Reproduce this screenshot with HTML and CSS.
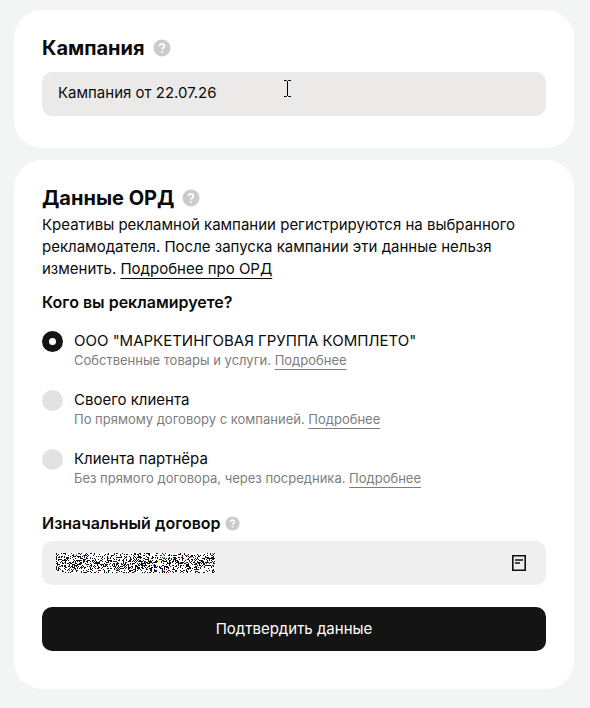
FILE: index.html
```html
<!DOCTYPE html>
<html lang="ru">
<head>
    <meta charset="UTF-8">
    <meta name="viewport" content="width=device-width, initial-scale=1.0">
    <title>Кампания</title>
    <link rel="stylesheet" href="styles.css">
</head>
<body>
    <main>
        <section class="card">
            <div class="card-title">
                <h2><label for="campaign-name">Кампания</label></h2>
                <svg class="help" viewBox="0 0 18 18" aria-hidden="true">
                    <circle cx="9" cy="9" r="8.5" fill="#cbcbcb"/>
                    <path d="M6.5 7.2a2.4 2.2 0 1 1 3.8 1.7c-.8.5-1.3.8-1.3 1.7M9 11.9v1.9" fill="none" stroke="#fff" stroke-width="1.9"/>
                </svg>
            </div>
            <div class="field-wrap">
                <input class="field" type="text" id="campaign-name" value="Кампания от 22.07.26">
                <svg class="cursor" viewBox="0 0 9 17" aria-hidden="true">
                    <path d="M1 .5h2.5l1 1 1-1H8M4.5 1v15M1 16.5h2.5l1-1 1 1H8" fill="none" stroke="#000"/>
                </svg>
            </div>
        </section>

        <section class="card card-ord">
            <div class="card-title">
                <h2>Данные ОРД</h2>
                <svg class="help" viewBox="0 0 18 18" aria-hidden="true">
                    <circle cx="9" cy="9" r="8.5" fill="#cbcbcb"/>
                    <path d="M6.5 7.2a2.4 2.2 0 1 1 3.8 1.7c-.8.5-1.3.8-1.3 1.7M9 11.9v1.9" fill="none" stroke="#fff" stroke-width="1.9"/>
                </svg>
            </div>
            <p class="intro">Креативы рекламной кампании регистрируются на выбранного рекламодателя. После запуска кампании эти данные нельзя изменить. <a href="#">Подробнее про ОРД</a></p>

            <form id="ord-form">
                <fieldset>
                    <legend>Кого вы рекламируете?</legend>
                    <div class="option">
                        <input type="radio" name="advertiser" id="adv-own" checked>
                        <div>
                            <label for="adv-own">ООО "МАРКЕТИНГОВАЯ ГРУППА КОМПЛЕТО"</label>
                            <p>Собственные товары и услуги. <a href="#">Подробнее</a></p>
                        </div>
                    </div>
                    <div class="option">
                        <input type="radio" name="advertiser" id="adv-client">
                        <div>
                            <label for="adv-client">Своего клиента</label>
                            <p>По прямому договору с компанией. <a href="#">Подробнее</a></p>
                        </div>
                    </div>
                    <div class="option">
                        <input type="radio" name="advertiser" id="adv-partner">
                        <div>
                            <label for="adv-partner">Клиента партнёра</label>
                            <p>Без прямого договора, через посредника. <a href="#">Подробнее</a></p>
                        </div>
                    </div>
                </fieldset>

                <div class="contract-title">
                    <h3 id="contract-label">Изначальный договор</h3>
                    <svg class="help help-small" viewBox="0 0 18 18" aria-hidden="true">
                        <circle cx="9" cy="9" r="8.5" fill="#cbcbcb"/>
                        <path d="M6.5 7.2a2.4 2.2 0 1 1 3.8 1.7c-.8.5-1.3.8-1.3 1.7M9 11.9v1.9" fill="none" stroke="#fff" stroke-width="1.9"/>
                    </svg>
                </div>
                <button type="button" class="field contract" aria-labelledby="contract-label">
                    <canvas id="contract-mask" width="159" height="20"></canvas>
                    <svg class="doc-icon" viewBox="0 0 16 18" aria-hidden="true">
                        <path d="M1.8 1.8h12.4v14.4H1.8zM4 6h8M4 9h5" fill="none" stroke="#111" stroke-width="1.6"/>
                    </svg>
                </button>
                <button type="submit" class="submit">Подтвердить данные</button>
            </form>
        </section>
    </main>
    <script src="script.js"></script>
</body>
</html>
```
FILE: styles.css
```css
* {
    box-sizing: border-box;
}

body {
    margin: 0;
    background: #f3f5f4;
    color: #0b0b0b;
    font-family: Inter, "Liberation Sans", sans-serif;
    font-size: 15px;
    line-height: 22px;
}

main {
    display: flex;
    flex-direction: column;
    gap: 12px;
    padding: 10px 16px 18px 14px;
}

.card {
    padding: 24px 28px 32px;
    background: #fff;
    border-radius: 28px;
}

.card-ord {
    padding-bottom: 38px;
}

.card-title {
    display: flex;
    align-items: center;
    gap: 8px;
}

h2, h3, p {
    margin: 0;
}

h2 {
    font-size: 20px;
    line-height: 28px;
    font-weight: 700;
}

.help {
    width: 18px;
    height: 18px;
}

.help-small {
    width: 15px;
    height: 15px;
}

.field-wrap {
    position: relative;
    margin-top: 10px;
}

.field {
    display: block;
    width: 100%;
    height: 44px;
    padding: 0 16px 3px;
    border: none;
    border-radius: 10px;
    background: #ebeae9;
    color: inherit;
    font: inherit;
}

.cursor {
    position: absolute;
    left: 241px;
    top: 8px;
    width: 9px;
    height: 17px;
}

a {
    color: inherit;
    text-decoration: underline;
    text-decoration-thickness: 1px;
    text-underline-offset: 4px;
    text-decoration-skip-ink: none;
}

.intro {
    margin-top: 2px;
}

fieldset {
    display: flex;
    flex-direction: column;
    gap: 20px;
    margin: 11px 0 0;
    padding: 0;
    border: none;
}

legend {
    margin-bottom: 17px;
    padding: 0;
    font-size: 16px;
    font-weight: 600;
}

.option {
    display: flex;
    gap: 11px;
}

.option label {
    display: block;
}

.option p {
    font-size: 13px;
    line-height: 17px;
    color: #7d7d7d;
}

input[type="radio"] {
    appearance: none;
    flex: none;
    width: 21px;
    height: 21px;
    margin: 1px 0 0;
    border-radius: 50%;
    background: #e2e2e2;
}

input[type="radio"]:checked {
    border: 7px solid #141414;
    background: #fff;
}

.contract-title {
    display: flex;
    align-items: center;
    gap: 4px;
    margin-top: 25px;
}

h3 {
    font-size: 16px;
    line-height: 22px;
    font-weight: 600;
}

.contract {
    display: flex;
    align-items: center;
    justify-content: space-between;
    margin-top: 7px;
    padding: 0 19px 0 14px;
    background: #f0efef;
}

.doc-icon {
    width: 16px;
    height: 18px;
}

.submit {
    width: 100%;
    height: 44px;
    margin-top: 22px;
    border: none;
    border-radius: 10px;
    background: #141414;
    color: #fff;
    font: inherit;
    cursor: pointer;
}
```
FILE: script.js
```js
// noise that hides the contract number
const canvas = document.getElementById('contract-mask');
const ctx = canvas.getContext('2d');
const tints = ['#e01010', '#1010e0', '#e8e800', '#00b8d8'];
let seed = 42;

function random() {
    seed = (seed * 16807) % 2147483647;
    return seed / 2147483647;
}

for (let y = 0; y < canvas.height; y++) {
    for (let x = 0; x < canvas.width; x++) {
        // denser in the middle, where the digits are
        const density = y > 3 && y < 16 ? 0.4 : 0.25;
        ctx.fillStyle = random() < density ? '#111' : '#fff';
        if (random() < 0.018) {
            ctx.fillStyle = tints[Math.floor(random() * tints.length)];
        }
        ctx.fillRect(x, y, 1, 1);
    }
}

document.getElementById('ord-form').addEventListener('submit', function(e) {
    e.preventDefault();
});
```
